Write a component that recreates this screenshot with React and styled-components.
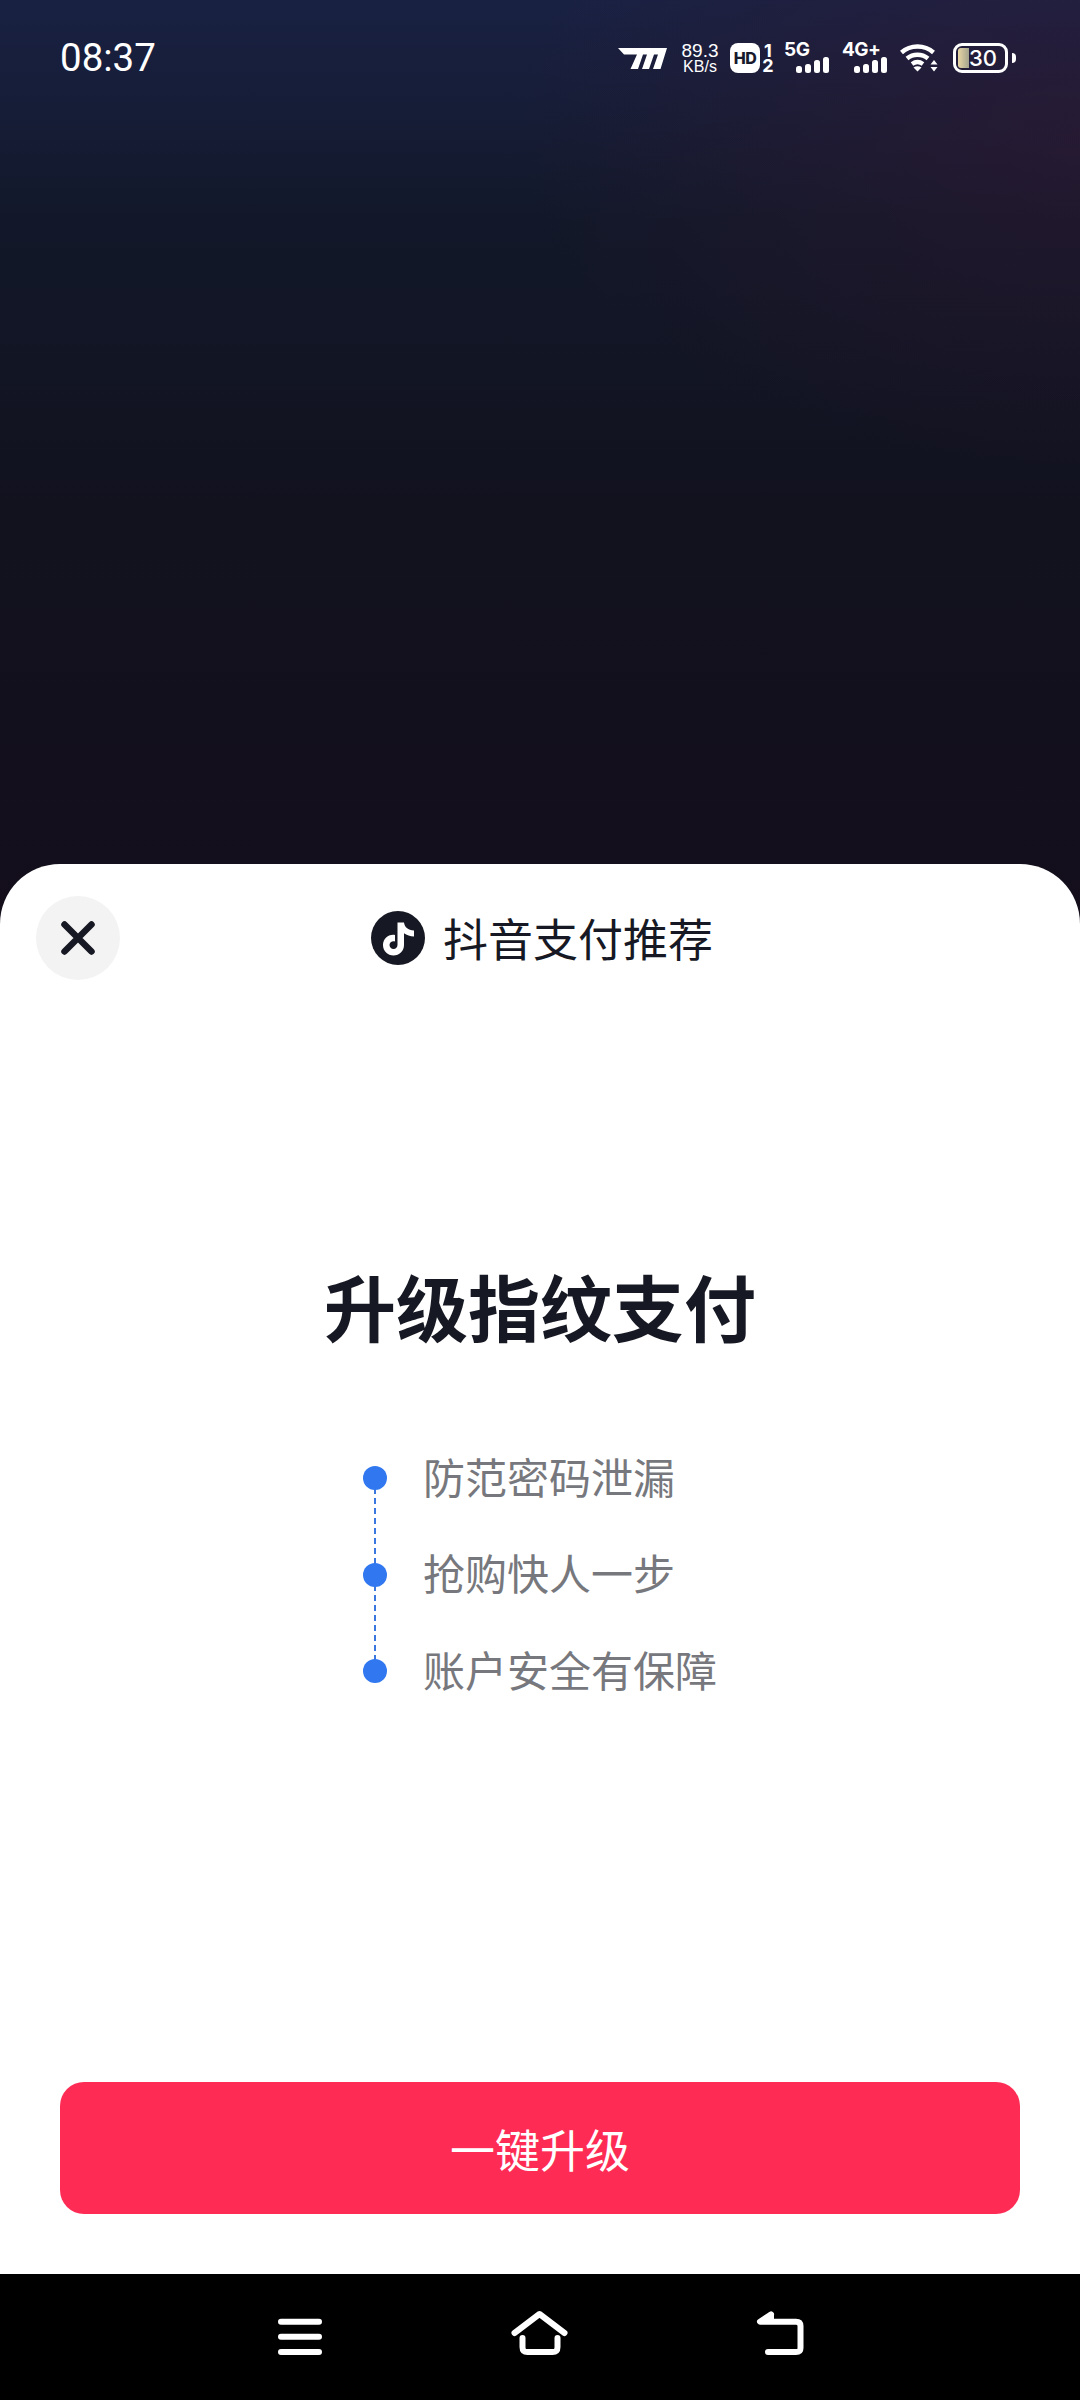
import React from "react";
import styled, { createGlobalStyle } from "styled-components";

const CJK = `"Noto Sans CJK SC", "Noto Sans", sans-serif`;

const GlobalStyle = createGlobalStyle`
  html, body {
    margin: 0;
    padding: 0;
    background: #000000;
  }
  * {
    box-sizing: border-box;
  }
`;

const Page = styled.div`
  width: 1080px;
  height: 2400px;
  display: flex;
  flex-direction: column;
  overflow: hidden;
  font-family: ${CJK};
`;

const Backdrop = styled.div`
  height: 924px;
  margin-bottom: -60px;
  flex-shrink: 0;
  background:
    radial-gradient(ellipse 560px 340px at 100% 130px, rgba(58, 24, 50, 0.45) 0%, rgba(58, 24, 50, 0) 100%),
    linear-gradient(180deg, #192143 0%, #171e3a 9%, #121829 24%, #12121f 55%, #140e1b 100%);
`;

const StatusBar = styled.div`
  height: 116px;
  padding: 0 64px 0 60px;
  display: flex;
  align-items: center;
  justify-content: space-between;
  color: #ffffff;
`;

const Clock = styled.span`
  font-family: Roboto, sans-serif;
  font-size: 38.5px;
  line-height: 44px;
`;

const StatusIcons = styled.div`
  display: flex;
  align-items: center;
  height: 30px;
`;

const Speed = styled.div`
  width: 36px;
  margin: 0 12px 0 15px;
  display: flex;
  flex-direction: column;
  align-items: center;
  font-family: "Liberation Sans", sans-serif;
  white-space: nowrap;
`;

const SpeedValue = styled.span`
  font-size: 19px;
  line-height: 17px;
`;

const SpeedUnit = styled.span`
  font-size: 16px;
  line-height: 16px;
`;

const Signal = styled.div`
  width: 45px;
  height: 30px;
  margin-left: ${(p) => p.$gap}px;
  display: flex;
  flex-direction: column;
`;

const SignalLabel = styled.span`
  font-family: Inter, "Liberation Sans", sans-serif;
  font-size: 19px;
  font-weight: 700;
  line-height: 14px;
  height: 14px;
  letter-spacing: -0.5px;
`;

const SignalBars = styled.div`
  display: flex;
  align-items: flex-end;
  justify-content: flex-end;
  gap: 3px;
  height: 16px;
`;

const SignalBar = styled.span`
  width: 6px;
  height: ${(p) => p.$h}px;
  border-radius: 2.5px;
  background: #ffffff;
`;

const HdBadge = styled.div`
  width: 30px;
  height: 30px;
  border-radius: 8px;
  background: #ffffff;
  color: #171a2c;
  display: flex;
  align-items: center;
  justify-content: center;
  font-family: Inter, "Liberation Sans", sans-serif;
  font-size: 16px;
  font-weight: 800;
  letter-spacing: -0.5px;
`;

const SimSlots = styled.div`
  width: 12px;
  margin-left: 2px;
  text-align: center;
  word-break: break-all;
  font-family: Inter, "Liberation Sans", sans-serif;
  font-size: 18px;
  font-weight: 700;
  line-height: 15px;
`;

const WifiIcon = styled.svg`
  display: block;
  margin-left: 13px;
  fill: none;
  stroke: #ffffff;
  stroke-width: 4.4;
`;

const Battery = styled.div`
  position: relative;
  width: 55px;
  height: 30px;
  margin-left: 15px;
  border: 3px solid #ffffff;
  border-radius: 9px;
  display: flex;
  align-items: center;
  justify-content: center;
  font-family: Inter, "Liberation Sans", sans-serif;
  font-size: 22px;
  font-weight: 500;
  line-height: 24px;
`;

const BatteryLevel = styled.span`
  position: absolute;
  left: 2px;
  top: 2px;
  bottom: 2px;
  width: 11px;
  border-radius: 3px 0 0 3px;
  background: linear-gradient(90deg, #e8d6a4, #a4a38e);
`;

const BatteryValue = styled.span`
  position: relative;
  margin-left: 5px;
`;

const BatteryNub = styled.span`
  width: 4px;
  height: 10px;
  margin-left: 4px;
  border-radius: 0 4px 4px 0;
  background: #ffffff;
`;

const Sheet = styled.div`
  flex: 1;
  position: relative;
  z-index: 1;
  background: #ffffff;
  border-radius: 60px 60px 0 0;
  display: flex;
  flex-direction: column;
  align-items: center;
`;

const SheetHeader = styled.div`
  position: relative;
  width: 100%;
  height: 84px;
  margin-top: 32px;
  padding-left: 4px;
  display: flex;
  align-items: center;
  justify-content: center;
  gap: 18px;
`;

const CloseButton = styled.button`
  position: absolute;
  left: 36px;
  top: 0;
  width: 84px;
  height: 84px;
  padding: 0;
  border: none;
  border-radius: 50%;
  background: #f3f3f4;
  display: flex;
  align-items: center;
  justify-content: center;
`;

const Brand = styled.span`
  font-size: 45px;
  line-height: 60px;
  color: #161823;
`;

const Heading = styled.h1`
  margin: 275px 0 0;
  font-size: 72px;
  line-height: 100px;
  font-weight: 700;
  color: #161823;
`;

const Steps = styled.ul`
  margin: 75px 0 0 -2px;
  padding: 0;
  width: 352px;
  list-style: none;
`;

const Step = styled.li`
  position: relative;
  height: 96.5px;
  padding: 0 0 6px 60px;
  display: flex;
  align-items: center;
  font-size: 42px;
  color: #77787d;
  white-space: nowrap;

  &:not(:last-child)::after {
    content: "";
    position: absolute;
    left: 11px;
    top: 48px;
    height: 96px;
    border-left: 2px dashed #3a78e0;
  }
`;

const Dot = styled.span`
  position: absolute;
  z-index: 1;
  left: 0;
  top: 36px;
  width: 24px;
  height: 24px;
  border-radius: 50%;
  background: #3178f0;
`;

const Footer = styled.div`
  width: 100%;
  margin-top: auto;
  padding: 0 60px 60px;
`;

const PrimaryButton = styled.button`
  width: 100%;
  height: 132px;
  border: none;
  border-radius: 24px;
  background: #fe2c55;
  color: #ffffff;
  font-family: ${CJK};
  font-size: 45px;
`;

const NavBar = styled.nav`
  height: 126px;
  flex-shrink: 0;
  background: #000000;
  display: flex;
  align-items: flex-start;
  gap: 188.5px;
  padding: 36px 0 0 278px;
`;

const NavIcon = styled.svg`
  display: block;
  width: ${(p) => p.$w}px;
  height: 46px;
  fill: none;
  stroke: #ffffff;
  stroke-width: 6;
  stroke-linecap: round;
  stroke-linejoin: round;
`;

const steps = ["防范密码泄漏", "抢购快人一步", "账户安全有保障"];
const barHeights = [7, 9, 13, 16];

function SignalGroup({ label, gap }) {
  return (
    <Signal $gap={gap}>
      <SignalLabel>{label}</SignalLabel>
      <SignalBars>
        {barHeights.map((h) => (
          <SignalBar key={h} $h={h} />
        ))}
      </SignalBars>
    </Signal>
  );
}

function CarrierLogo() {
  return (
    <svg width="49" height="21" viewBox="0 0 49 21" fill="#ffffff">
      <path d="M0 0H49L42.5 21H35L40 6.500H36L31 21H24L29 6.500H25L20 21H12.500L19 6.500H6Z" />
    </svg>
  );
}

function Wifi() {
  return (
    <WifiIcon width="38" height="28" viewBox="0 0 38 28">
      <path d="M1.500 8.500C10.500 0.500 24.500 0.500 33.500 8.500" />
      <path d="M7 14.500C13 9.500 22 9.500 28 14.500" />
      <path d="M12 20C15.500 17.500 19.500 17.500 23 20" />
      <path d="M13.500 23.500L17.500 27.500L21.500 23.500C19 21.800 16 21.800 13.500 23.500Z" fill="#ffffff" stroke="none" />
      <path d="M30.500 20.500L34 16L37.500 20.500ZM30.500 23L34 27.500L37.500 23Z" fill="#ffffff" stroke="none" />
    </WifiIcon>
  );
}

function NoteBadge() {
  return (
    <svg width="54" height="54" viewBox="0 0 54 54">
      <circle cx="27" cy="27" r="27" fill="#161823" />
      <path
        d="M26.500 11.500H33c.4 4.500 4 7.500 10 8v6c-3.800 0-7.300-1.200-10-3.200v11.700c0 6-4.800 10.500-10.500 10.500S12 40 12 34c0-6.200 5.500-11.200 12-10v6.500c-2.800-.9-5.500 1-5.500 3.500 0 2.300 1.800 4 4 4 2.400 0 4-1.800 4-4.200z"
        fill="#ffffff"
      />
    </svg>
  );
}

export default function App() {
  return (
    <Page>
      <GlobalStyle />
      <Backdrop>
        <StatusBar>
          <Clock>08:37</Clock>
          <StatusIcons>
            <CarrierLogo />
            <Speed>
              <SpeedValue>89.3</SpeedValue>
              <SpeedUnit>KB/s</SpeedUnit>
            </Speed>
            <HdBadge>HD</HdBadge>
            <SimSlots>12</SimSlots>
            <SignalGroup label="5G" gap={10} />
            <SignalGroup label="4G+" gap={13} />
            <Wifi />
            <Battery>
              <BatteryLevel />
              <BatteryValue>30</BatteryValue>
            </Battery>
            <BatteryNub />
          </StatusIcons>
        </StatusBar>
      </Backdrop>
      <Sheet>
        <SheetHeader>
          <CloseButton aria-label="关闭">
            <svg width="36" height="36" viewBox="0 0 36 36" fill="none" stroke="#161823" strokeWidth="6.500" strokeLinecap="round">
              <path d="M4.500 4.500L31.500 31.500M31.500 4.500L4.500 31.500" />
            </svg>
          </CloseButton>
          <NoteBadge />
          <Brand>抖音支付推荐</Brand>
        </SheetHeader>
        <Heading>升级指纹支付</Heading>
        <Steps>
          {steps.map((text) => (
            <Step key={text}>
              <Dot />
              {text}
            </Step>
          ))}
        </Steps>
        <Footer>
          <PrimaryButton>一键升级</PrimaryButton>
        </Footer>
      </Sheet>
      <NavBar>
        <NavIcon $w={44} viewBox="0 0 44 46">
          <path d="M3 11.700H41M3 26.700H41M3 42H41" />
        </NavIcon>
        <NavIcon $w={57} viewBox="0 0 57 46">
          <path d="M3.500 23L28.500 4L53.500 23" />
          <path d="M11.500 28V37C11.500 40.500 13 42 16.500 42H41.500C45 42 46.500 40.500 46.500 37V28" />
        </NavIcon>
        <NavIcon $w={49} viewBox="0 0 49 46">
          <path d="M15 4.500L4 11.700H40C43 11.700 44.500 13 44.500 16V38C44.500 41 43 42 40 42H12" />
          <path d="M15 5V11" />
        </NavIcon>
      </NavBar>
    </Page>
  );
}
